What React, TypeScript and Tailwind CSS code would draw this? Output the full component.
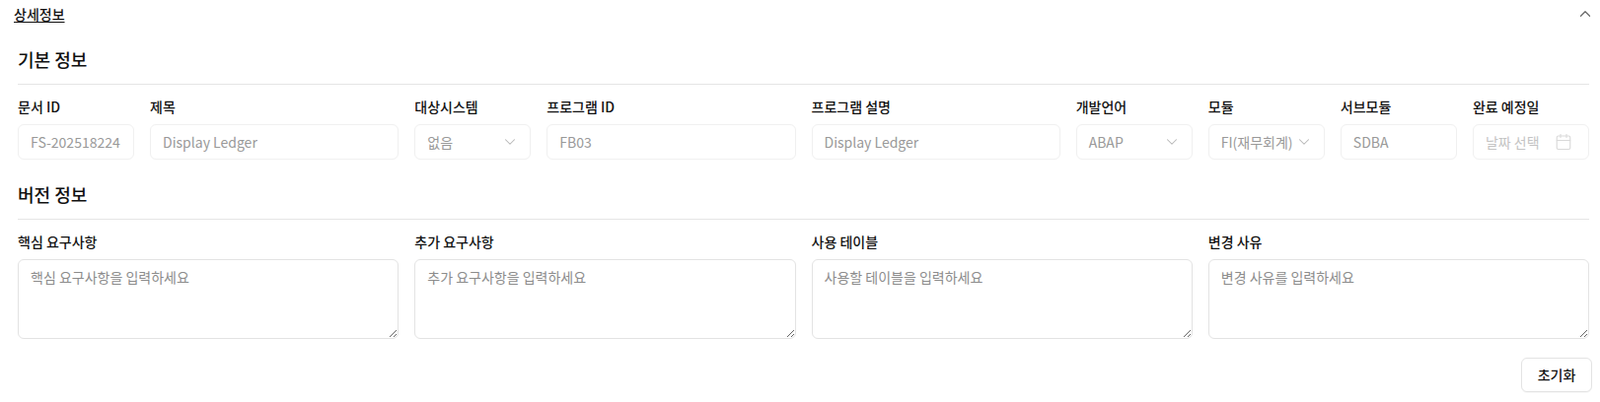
import React from "react";
import { Calendar, ChevronDown, ChevronUp } from "lucide-react";

const boxClass =
  "h-9 w-full rounded-md border border-[#f0f0f0] bg-white px-3 text-sm text-[#999] outline-none";

function Label({ children }: { children: React.ReactNode }) {
  return <label className="mb-2 block h-[20px] text-sm leading-5 font-medium text-[#111]">{children}</label>;
}

function TextField({ label, value, span }: { label: string; value: string; span: string }) {
  return (
    <div className={span}>
      <Label>{label}</Label>
      <input readOnly value={value} className={boxClass} />
    </div>
  );
}

function SelectField({ label, value }: { label: string; value: string }) {
  return (
    <div className="col-span-1">
      <Label>{label}</Label>
      <div className={`${boxClass} flex items-center justify-between`}>
        <span className="whitespace-nowrap">{value}</span>
        <ChevronDown className="-mr-px h-[18px] w-[18px] shrink-0 text-[#b5b5b5]" strokeWidth={1.4} />
      </div>
    </div>
  );
}

function AreaField({ label, placeholder }: { label: string; placeholder: string }) {
  return (
    <div className="col-span-3">
      <Label>{label}</Label>
      <textarea
        placeholder={placeholder}
        className="block h-[81px] w-full rounded-md border border-[#e3e3e3] bg-white px-3 py-[5px] text-sm leading-6 outline-none placeholder:text-[#8c8c8c]"
      />
    </div>
  );
}

function SectionTitle({ children }: { children: React.ReactNode }) {
  return (
    <h3 className="border-b border-[#e5e5e5] pb-[11px] text-lg leading-7 font-medium text-[#111]">{children}</h3>
  );
}

export default function App() {
  return (
    <main className="h-[408px] overflow-hidden bg-white pr-2 pl-[14px] font-['Noto_Sans_CJK_KR',sans-serif]">
      {/* Collapse header */}
      <div className="flex h-[28px] items-center justify-between">
        <span className="text-sm font-medium text-[#111] underline underline-offset-2">상세정보</span>
        <ChevronUp className="-mr-[2px] h-[18px] w-[18px] text-[#666]" strokeWidth={1.6} />
      </div>

      <div className="pr-[3px] pl-1">
        {/* Basic info */}
        <section className="pt-[18px]">
          <SectionTitle>기본 정보</SectionTitle>
          <div className="mt-3 grid grid-cols-12 gap-4">
            <TextField span="col-span-1" label="문서 ID" value="FS-202518224" />
            <TextField span="col-span-2" label="제목" value="Display Ledger" />
            <SelectField label="대상시스템" value="없음" />
            <TextField span="col-span-2" label="프로그램 ID" value="FB03" />
            <TextField span="col-span-2" label="프로그램 설명" value="Display Ledger" />
            <SelectField label="개발언어" value="ABAP" />
            <SelectField label="모듈" value="FI(재무회계)" />
            <TextField span="col-span-1" label="서브모듈" value="SDBA" />
            <div className="col-span-1">
              <Label>완료 예정일</Label>
              <div className={`${boxClass} flex items-center justify-between`}>
                <span className="text-[#c4c4c4]">날짜 선택</span>
                <Calendar className="mr-1 h-[18px] w-[18px] text-[#d9d9d9]" strokeWidth={1.5} />
              </div>
            </div>
          </div>
        </section>

        {/* Version info */}
        <section className="pt-[21px]">
          <SectionTitle>버전 정보</SectionTitle>
          <div className="mt-3 grid grid-cols-12 gap-4">
            <AreaField label="핵심 요구사항" placeholder="핵심 요구사항을 입력하세요" />
            <AreaField label="추가 요구사항" placeholder="추가 요구사항을 입력하세요" />
            <AreaField label="사용 테이블" placeholder="사용할 테이블을 입력하세요" />
            <AreaField label="변경 사유" placeholder="변경 사유를 입력하세요" />
          </div>
        </section>
      </div>

      <div className="mt-[19px] flex justify-end">
        <button className="h-[35px] w-[72px] rounded-md border border-[#e3e3e3] bg-white pb-px text-sm font-medium text-[#111] shadow-[0_1px_1px_rgba(0,0,0,0.03)]">
          초기화
        </button>
      </div>
    </main>
  );
}
